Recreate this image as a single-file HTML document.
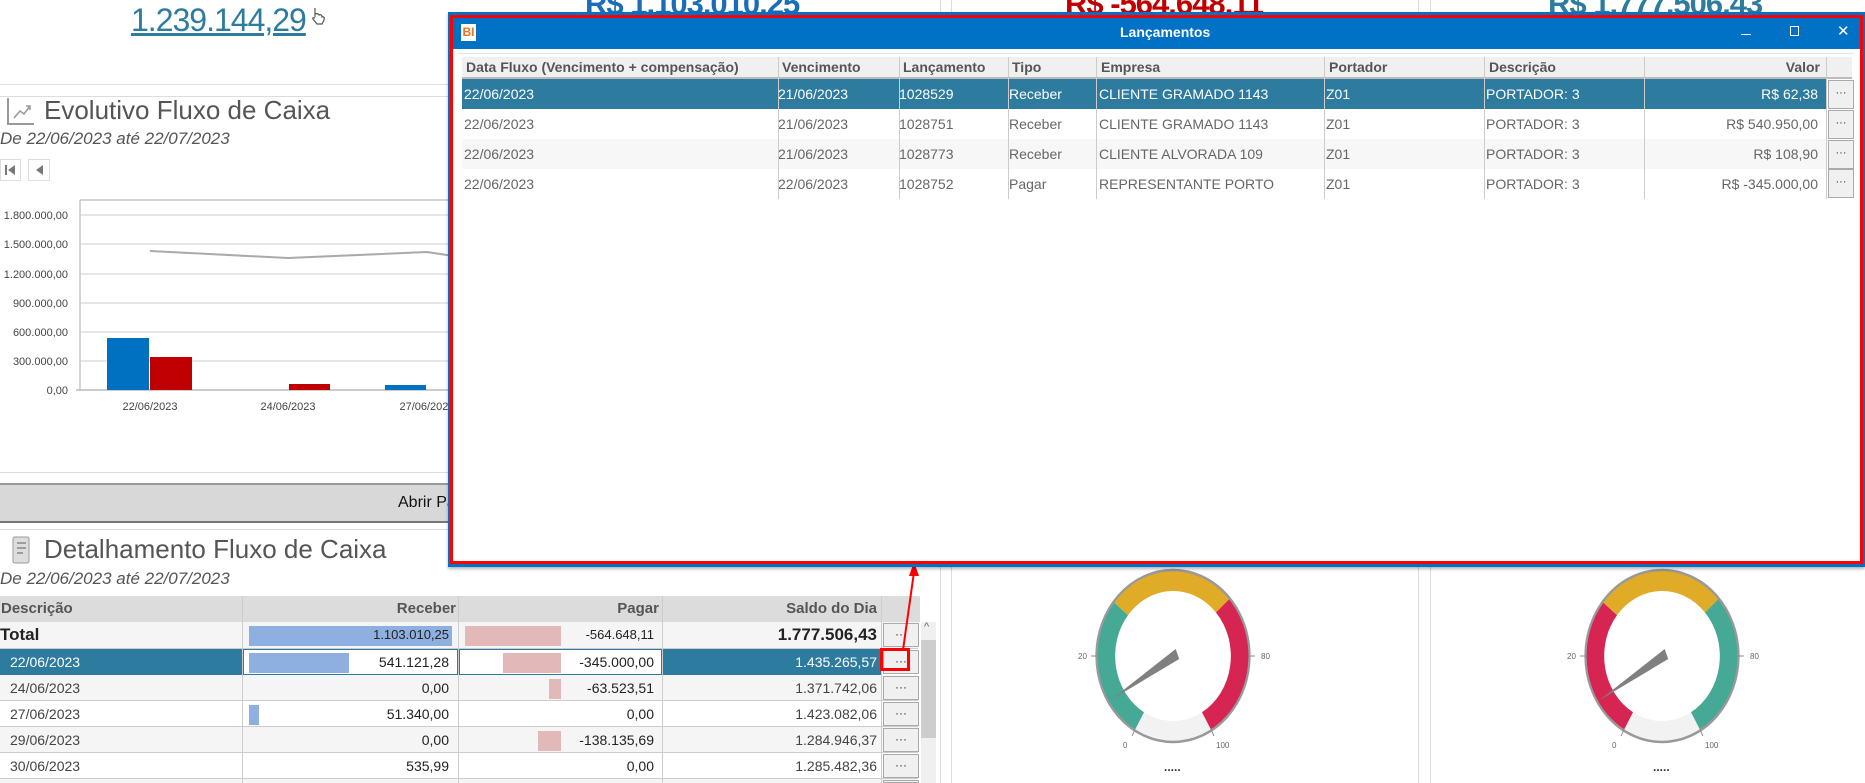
<!DOCTYPE html>
<html><head><meta charset="utf-8"><style>
*{margin:0;padding:0;box-sizing:border-box}
html,body{width:1865px;height:783px;overflow:hidden}
body{background:#fff;position:relative;font-family:"Liberation Sans Narrow","Liberation Sans",sans-serif;color:#444}
.a{position:absolute}
.t{position:absolute;white-space:nowrap}
.hl{position:absolute;height:1px;background:#ddd}
.vl{position:absolute;width:1px;background:#ddd}
.bigc{font-size:31px;font-weight:bold;letter-spacing:-1px;top:-14px}
.tbl .c{position:absolute;white-space:nowrap;font-size:14px;line-height:26px}
.dots{position:absolute;width:36px;height:24px;border:1px solid #aaa;background:#f0f0f0;font-size:12px;text-align:center;line-height:20px;color:#333}
.pr{position:absolute;left:462px;width:1390px;height:30px;font-size:14px;color:#666}
.pr span{position:absolute;top:7px;white-space:nowrap}
.ph{position:absolute;top:7px;font-weight:bold;color:#555;font-size:14px}
.pd{position:absolute;left:1828px;width:26px;height:29px;border:1px solid #aaa;background:#f0f0f0;text-align:center;font-size:11px;line-height:24px;color:#333}
</style></head><body>

<div class="t" style="left:131px;top:2px;font-size:32px;color:#2e7ba0;text-decoration:underline;letter-spacing:-1px">1.239.144,29</div>
<svg class="a" style="left:310px;top:6px" width="16" height="20"><path d="M5 2 V11 M5 8 Q8 7 9 9 Q12 8 12 11 Q15 10 14 14 L12 18 H7 L3 13 Q2 11 5 12" stroke="#555" stroke-width="1.2" fill="#fff"/></svg>
<div class="t bigc" style="left:585px;color:#1a6eb8">R$ 1.103.010,25</div>
<div class="t bigc" style="left:1065px;color:#c00000">R$ -564.648,11</div>
<div class="t bigc" style="left:1548px;color:#2e7ba0">R$ 1.777.506,43</div>
<div class="vl" style="left:940px;top:0;height:783px"></div>
<div class="vl" style="left:951px;top:0;height:783px"></div>
<div class="vl" style="left:1418px;top:0;height:783px"></div>
<div class="vl" style="left:1430px;top:0;height:783px"></div>

<div class="hl" style="left:0;top:84px;width:930px"></div>
<div class="hl" style="left:0;top:96px;width:930px"></div>
<svg class="a" style="left:6px;top:96px" width="30" height="32"><path d="M2 2 V28 H28" stroke="#999" stroke-width="2" fill="none"/><path d="M8 22 L14 15 L18 18 L24 10 M20 10 H24 V14" stroke="#999" stroke-width="1.5" fill="none"/></svg>
<div class="t" style="left:44px;top:95px;font-size:26px;color:#555;font-family:'Liberation Sans',sans-serif">Evolutivo Fluxo de Caixa</div>
<div class="t" style="left:0;top:129px;font-size:17px;font-style:italic;color:#555;font-family:'Liberation Sans',sans-serif">De 22/06/2023 até 22/07/2023</div>
<div class="a" style="left:0;top:159px;width:21px;height:22px;border:1px solid #ddd;background:#fff"><div class="a" style="left:4px;top:5px;width:2px;height:10px;background:#777"></div><div class="a" style="left:7px;top:5px;border-right:7px solid #777;border-top:5px solid transparent;border-bottom:5px solid transparent"></div></div>
<div class="a" style="left:28px;top:159px;width:22px;height:22px;border:1px solid #ddd;background:#fff"><div class="a" style="left:7px;top:5px;border-right:7px solid #777;border-top:5px solid transparent;border-bottom:5px solid transparent"></div></div>

<svg class="a" style="left:0;top:195px" width="460" height="225" font-family="Liberation Sans Narrow, Liberation Sans, sans-serif" font-size="11" fill="#444">
<line x1="80" y1="5" x2="460" y2="5" stroke="#aaa"/>
<line x1="80" y1="5" x2="80" y2="195" stroke="#aaa"/>
<g stroke="#ccc"><line x1="80" y1="20" x2="460" y2="20"/><line x1="80" y1="49" x2="460" y2="49"/><line x1="80" y1="79" x2="460" y2="79"/><line x1="80" y1="108" x2="460" y2="108"/><line x1="80" y1="137" x2="460" y2="137"/><line x1="80" y1="166" x2="460" y2="166"/></g>
<line x1="76" y1="195" x2="460" y2="195" stroke="#999"/>
<g text-anchor="end"><text x="68" y="24">1.800.000,00</text><text x="68" y="53">1.500.000,00</text><text x="68" y="83">1.200.000,00</text><text x="68" y="112">900.000,00</text><text x="68" y="141">600.000,00</text><text x="68" y="170">300.000,00</text><text x="68" y="199">0,00</text></g>
<rect x="107" y="143" width="42" height="52" fill="#0070c0"/>
<rect x="150" y="162" width="42" height="33" fill="#c00000"/>
<rect x="289" y="189" width="41" height="6" fill="#c00000"/>
<rect x="385" y="190" width="41" height="5" fill="#0070c0"/>
<polyline points="150,56 288,63 427,57 460,62" stroke="#aaa" stroke-width="2" fill="none"/>
<g text-anchor="middle"><text x="150" y="215">22/06/2023</text><text x="288" y="215">24/06/2023</text><text x="427" y="215">27/06/2023</text></g>
</svg>
<div class="hl" style="left:0;top:472px;width:930px"></div>
<div class="a" style="left:0;top:483px;width:930px;height:40px;background:#d8d8d8;border-top:2px solid #999;border-bottom:2px solid #777"></div>
<div class="t" style="left:398px;top:494px;font-size:16px;color:#111">Abrir Painel Fluxo de Caixa</div>
<div class="hl" style="left:0;top:529px;width:930px"></div>
<svg class="a" style="left:8px;top:534px" width="26" height="32"><rect x="5" y="3" width="16" height="26" rx="2" fill="#ddd" stroke="#999"/><path d="M9 9 H18 M9 14 H18 M9 19 H15" stroke="#888" stroke-width="1.5"/></svg>
<div class="t" style="left:44px;top:534px;font-size:26px;color:#555;font-family:'Liberation Sans',sans-serif">Detalhamento Fluxo de Caixa</div>
<div class="t" style="left:0;top:569px;font-size:17px;font-style:italic;color:#555;font-family:'Liberation Sans',sans-serif">De 22/06/2023 até 22/07/2023</div>

<div class="tbl">
<div class="a" style="left:0;top:596px;width:920px;height:26px;background:#dcdcdc"></div>
<div class="c" style="left:1px;top:596px;font-weight:bold;color:#555;font-size:15px">Descrição</div>
<div class="c" style="left:244px;top:596px;width:212px;text-align:right;font-weight:bold;color:#555;font-size:15px">Receber</div>
<div class="c" style="left:459px;top:596px;width:200px;text-align:right;font-weight:bold;color:#555;font-size:15px">Pagar</div>
<div class="c" style="left:662px;top:596px;width:215px;text-align:right;font-weight:bold;color:#555;font-size:15px">Saldo do Dia</div>
<div class="a" style="left:0;top:622px;width:918px;height:26px;background:#f5f5f5"></div>
<div class="a" style="left:0;top:649px;width:242px;height:26px;background:#2e7ba0"></div>
<div class="a" style="left:243px;top:649px;width:215px;height:26px;border:1px solid #2e7ba0;background:#fff"></div>
<div class="a" style="left:459px;top:649px;width:203px;height:26px;border:1px solid #2e7ba0;background:#fff"></div>
<div class="a" style="left:662px;top:649px;width:219px;height:26px;background:#2e7ba0"></div>
<div class="a" style="left:0;top:675px;width:918px;height:26px;background:#f5f5f5"></div>
<div class="a" style="left:0;top:727px;width:918px;height:26px;background:#f5f5f5"></div>
<div class="a" style="left:0;top:779px;width:918px;height:4px;background:#f5f5f5"></div>
<div class="vl" style="left:242px;top:596px;height:187px;background:#ccc"></div>
<div class="vl" style="left:458px;top:596px;height:187px;background:#ccc"></div>
<div class="vl" style="left:662px;top:596px;height:187px;background:#ccc"></div>
<div class="vl" style="left:881px;top:596px;height:187px;background:#ccc"></div>
<div class="hl" style="left:0;top:648px;width:918px;background:#ccc"></div>
<div class="hl" style="left:0;top:700px;width:918px;background:#ccc"></div>
<div class="hl" style="left:0;top:726px;width:918px;background:#ccc"></div>
<div class="hl" style="left:0;top:752px;width:918px;background:#ccc"></div>
<div class="hl" style="left:0;top:778px;width:918px;background:#ccc"></div>
<div class="a" style="left:249px;top:626px;width:203px;height:20px;background:#8db0e0"></div>
<div class="a" style="left:465px;top:626px;width:96px;height:20px;background:#e3b8b8"></div>
<div class="a" style="left:249px;top:653px;width:100px;height:20px;background:#8db0e0"></div>
<div class="a" style="left:503px;top:653px;width:58px;height:20px;background:#e3b8b8"></div>
<div class="a" style="left:549px;top:679px;width:12px;height:20px;background:#e3b8b8"></div>
<div class="a" style="left:249px;top:705px;width:10px;height:20px;background:#8db0e0"></div>
<div class="a" style="left:538px;top:731px;width:23px;height:20px;background:#e3b8b8"></div>
<div class="c" style="left:0;top:622px;font-size:17px;font-weight:bold;color:#222">Total</div>
<div class="c" style="left:244px;top:622px;width:205px;text-align:right;font-size:13px;color:#222">1.103.010,25</div>
<div class="c" style="left:459px;top:622px;width:195px;text-align:right;font-size:13px;color:#222">-564.648,11</div>
<div class="c" style="left:662px;top:622px;width:215px;text-align:right;font-size:17px;font-weight:bold;color:#222">1.777.506,43</div>
<div class="c" style="left:10px;top:649px;color:#fff">22/06/2023</div>
<div class="c" style="left:244px;top:649px;width:205px;text-align:right;color:#222">541.121,28</div>
<div class="c" style="left:459px;top:649px;width:195px;text-align:right;color:#222">-345.000,00</div>
<div class="c" style="left:662px;top:649px;width:215px;text-align:right;color:#fff">1.435.265,57</div>
<div class="c" style="left:10px;top:675px">24/06/2023</div>
<div class="c" style="left:244px;top:675px;width:205px;text-align:right;color:#222">0,00</div>
<div class="c" style="left:459px;top:675px;width:195px;text-align:right;color:#222">-63.523,51</div>
<div class="c" style="left:662px;top:675px;width:215px;text-align:right">1.371.742,06</div>
<div class="c" style="left:10px;top:701px">27/06/2023</div>
<div class="c" style="left:244px;top:701px;width:205px;text-align:right;color:#222">51.340,00</div>
<div class="c" style="left:459px;top:701px;width:195px;text-align:right;color:#222">0,00</div>
<div class="c" style="left:662px;top:701px;width:215px;text-align:right">1.423.082,06</div>
<div class="c" style="left:10px;top:727px">29/06/2023</div>
<div class="c" style="left:244px;top:727px;width:205px;text-align:right;color:#222">0,00</div>
<div class="c" style="left:459px;top:727px;width:195px;text-align:right;color:#222">-138.135,69</div>
<div class="c" style="left:662px;top:727px;width:215px;text-align:right">1.284.946,37</div>
<div class="c" style="left:10px;top:753px">30/06/2023</div>
<div class="c" style="left:244px;top:753px;width:205px;text-align:right;color:#222">535,99</div>
<div class="c" style="left:459px;top:753px;width:195px;text-align:right;color:#222">0,00</div>
<div class="c" style="left:662px;top:753px;width:215px;text-align:right">1.285.482,36</div>
<div class="dots" style="left:883px;top:623px">···</div>
<div class="dots" style="left:883px;top:650px">···</div>
<div class="dots" style="left:883px;top:676px">···</div>
<div class="dots" style="left:883px;top:702px">···</div>
<div class="dots" style="left:883px;top:728px">···</div>
<div class="dots" style="left:883px;top:754px">···</div>
<div class="dots" style="left:883px;top:780px;height:3px"></div>
<div class="a" style="left:921px;top:622px;width:15px;height:161px;background:#f0f0f0"></div>
<div class="a" style="left:921px;top:640px;width:15px;height:98px;background:#cdcdcd"></div>
<div class="t" style="left:924px;top:621px;font-size:11px;color:#666">^</div>
</div>
<div class="a" style="left:880px;top:648px;width:30px;height:23px;border:3px solid #f00"></div>
<svg class="a" style="left:895px;top:560px" width="30" height="95"><line x1="8" y1="90" x2="19" y2="12" stroke="#f00" stroke-width="2"/><polygon points="19,2 14,16 24,16" fill="#f00"/></svg>

<svg class="a" style="left:1050px;top:562px" width="250" height="221" font-family="Liberation Sans, sans-serif" font-size="8" fill="#666">
<g transform="translate(123,94)">
<g transform="scale(0.89,1)">
<path d="M-42.5 73.6 A85 85 0 0 1 -66 -53.5 L-50.5 -40.9 A65 65 0 0 0 -32.5 56.3 Z" fill="#46a996"/>
<path d="M-66 -53.5 A85 85 0 0 1 63.2 -56.9 L48.3 -43.5 A65 65 0 0 0 -50.5 -40.9 Z" fill="#e0ab26"/>
<path d="M63.2 -56.9 A85 85 0 0 1 42.5 73.6 L32.5 56.3 A65 65 0 0 0 48.3 -43.5 Z" fill="#d62553"/>
<path d="M42.5 73.6 A85 85 0 0 1 -42.5 73.6 L-32.5 56.3 A65 65 0 0 0 32.5 56.3 Z" fill="#f2f2f2"/>
<circle r="86" fill="none" stroke="#999" stroke-width="2.5"/>
<g stroke="#888"><line x1="-86" y1="0" x2="-92" y2="0"/><line x1="86" y1="0" x2="92" y2="0"/><line x1="-43" y1="74" x2="-46" y2="80"/><line x1="43" y1="74" x2="46" y2="80"/></g>
<polygon points="-70,44 3,-7 7,3" fill="#808080"/>
</g>
<text x="-95" y="3">20</text><text x="88" y="3">80</text><text x="-50" y="92">0</text><text x="43" y="92">100</text>
<text x="-9" y="115" font-size="12" font-weight="bold" fill="#333">.....</text>
</g></svg>
<svg class="a" style="left:1539px;top:562px" width="250" height="221" font-family="Liberation Sans, sans-serif" font-size="8" fill="#666">
<g transform="translate(123,94)">
<g transform="scale(0.89,1)">
<path d="M-42.5 73.6 A85 85 0 0 1 -66 -53.5 L-50.5 -40.9 A65 65 0 0 0 -32.5 56.3 Z" fill="#d62553"/>
<path d="M-66 -53.5 A85 85 0 0 1 63.2 -56.9 L48.3 -43.5 A65 65 0 0 0 -50.5 -40.9 Z" fill="#e0ab26"/>
<path d="M63.2 -56.9 A85 85 0 0 1 42.5 73.6 L32.5 56.3 A65 65 0 0 0 48.3 -43.5 Z" fill="#46a996"/>
<path d="M42.5 73.6 A85 85 0 0 1 -42.5 73.6 L-32.5 56.3 A65 65 0 0 0 32.5 56.3 Z" fill="#f2f2f2"/>
<circle r="86" fill="none" stroke="#999" stroke-width="2.5"/>
<g stroke="#888"><line x1="-86" y1="0" x2="-92" y2="0"/><line x1="86" y1="0" x2="92" y2="0"/><line x1="-43" y1="74" x2="-46" y2="80"/><line x1="43" y1="74" x2="46" y2="80"/></g>
<polygon points="-70,44 3,-7 7,3" fill="#808080"/>
</g>
<text x="-95" y="3">20</text><text x="88" y="3">80</text><text x="-50" y="92">0</text><text x="43" y="92">100</text>
<text x="-9" y="115" font-size="12" font-weight="bold" fill="#333">.....</text>
</g></svg>

<div class="a" style="left:448px;top:12px;width:1417px;height:555px;background:#0072c6;box-shadow:0 2px 3px rgba(0,0,0,.3)"></div>
<div class="a" style="left:450px;top:15px;width:1413px;height:549px;border:3px solid #f00;background:#fff"></div>
<div class="a" style="left:453px;top:18px;width:1407px;height:31px;background:#0072c6"></div>
<div class="a" style="left:461px;top:24px;width:15px;height:17px;background:#fff;color:#f07020;font-weight:bold;font-size:12px;line-height:17px;text-align:center">BI</div>
<div class="t" style="left:1120px;top:24px;font-size:14px;color:#fff;font-weight:bold">Lançamentos</div>
<div class="a" style="left:1741px;top:34px;width:10px;height:1px;background:#fff"></div>
<div class="a" style="left:1790px;top:26px;width:9px;height:10px;border:1px solid #fff"></div>
<div class="t" style="left:1837px;top:22px;font-size:15px;color:#fff">✕</div>
<div class="hl" style="left:458px;top:53px;width:1396px;background:#e4e4e4"></div>
<div class="a" style="left:462px;top:57px;width:1390px;height:22px;background:#f0f0f0;border-bottom:2px solid #bbb"></div>
<div class="ph" style="left:466px;top:59px">Data Fluxo (Vencimento + compensação)</div>
<div class="ph" style="left:782px;top:59px">Vencimento</div>
<div class="ph" style="left:903px;top:59px">Lançamento</div>
<div class="ph" style="left:1012px;top:59px">Tipo</div>
<div class="ph" style="left:1101px;top:59px">Empresa</div>
<div class="ph" style="left:1329px;top:59px">Portador</div>
<div class="ph" style="left:1489px;top:59px">Descrição</div>
<div class="ph" style="left:1650px;top:59px;width:170px;text-align:right">Valor</div>
<div class="pr" style="top:79px;background:#2e7ba0;width:1364px;color:#fff"><span style="left:2px">22/06/2023</span><span style="left:316px">21/06/2023</span><span style="left:437px">1028529</span><span style="left:547px">Receber</span><span style="left:637px">CLIENTE GRAMADO 1143</span><span style="left:864px">Z01</span><span style="left:1024px">PORTADOR: 3</span><span style="right:8px">R$ 62,38</span></div>
<div class="pr" style="top:109px"><span style="left:2px">22/06/2023</span><span style="left:316px">21/06/2023</span><span style="left:437px">1028751</span><span style="left:547px">Receber</span><span style="left:637px">CLIENTE GRAMADO 1143</span><span style="left:864px">Z01</span><span style="left:1024px">PORTADOR: 3</span><span style="right:34px">R$ 540.950,00</span></div>
<div class="pr" style="top:139px;background:#f7f7f7;width:1364px"><span style="left:2px">22/06/2023</span><span style="left:316px">21/06/2023</span><span style="left:437px">1028773</span><span style="left:547px">Receber</span><span style="left:637px">CLIENTE ALVORADA 109</span><span style="left:864px">Z01</span><span style="left:1024px">PORTADOR: 3</span><span style="right:8px">R$ 108,90</span></div>
<div class="pr" style="top:169px"><span style="left:2px">22/06/2023</span><span style="left:316px">22/06/2023</span><span style="left:437px">1028752</span><span style="left:547px">Pagar</span><span style="left:637px">REPRESENTANTE PORTO</span><span style="left:864px">Z01</span><span style="left:1024px">PORTADOR: 3</span><span style="right:34px">R$ -345.000,00</span></div>
<div class="vl" style="left:778px;top:57px;height:142px;background:#ccc"></div>
<div class="vl" style="left:899px;top:57px;height:142px;background:#ccc"></div>
<div class="vl" style="left:1008px;top:57px;height:142px;background:#ccc"></div>
<div class="vl" style="left:1096px;top:57px;height:142px;background:#ccc"></div>
<div class="vl" style="left:1324px;top:57px;height:142px;background:#ccc"></div>
<div class="vl" style="left:1484px;top:57px;height:142px;background:#ccc"></div>
<div class="vl" style="left:1644px;top:57px;height:142px;background:#ccc"></div>
<div class="vl" style="left:1826px;top:57px;height:142px;background:#ccc"></div>
<div class="pd" style="top:80px">···</div>
<div class="pd" style="top:110px">···</div>
<div class="pd" style="top:140px">···</div>
<div class="pd" style="top:169px">···</div>
</body></html>
